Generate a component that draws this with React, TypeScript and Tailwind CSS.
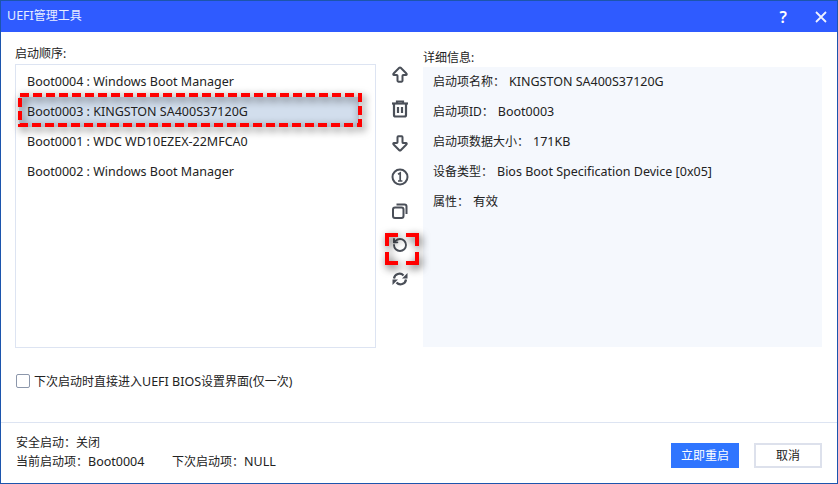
import React from "react";
import { ArrowBigDown, ArrowBigUp, RotateCcw } from "lucide-react";

const bootItems = [
  "Boot0004 : Windows Boot Manager",
  "Boot0003 : KINGSTON SA400S37120G",
  "Boot0001 : WDC WD10EZEX-22MFCA0",
  "Boot0002 : Windows Boot Manager",
];

const details = [
  { label: "启动项名称：", value: "KINGSTON SA400S37120G" },
  { label: "启动项ID：", value: "Boot0003" },
  { label: "启动项数据大小：", value: "171KB" },
  { label: "设备类型：", value: "Bios Boot Specification Device [0x05]" },
  { label: "属性：", value: "有效" },
];

const fontClass = "[font-family:'Noto_Sans','Noto_Sans_CJK_SC',sans-serif]";

function TrashIcon() {
  return (
    <svg width="18" height="18" viewBox="0 0 18 18" fill="none" stroke="#4a4f58" strokeWidth="2.2">
      <path d="M1 3.5h16" />
      <path d="M6 3V1.5h6V3" />
      <path d="M3 4v11a1.5 1.5 0 0 0 1.5 1.5h9A1.5 1.5 0 0 0 15 15V4" />
      <path d="M7 7v6M11 7v6" />
    </svg>
  );
}

function InfoOneIcon() {
  return (
    <svg width="18" height="18" viewBox="0 0 18 18" fill="none" stroke="#4a4f58" strokeWidth="2">
      <circle cx="9" cy="9" r="7.5" />
      <path d="M7 6.2 9.2 5v7.2M7 13h4.4" strokeWidth="1.7" />
    </svg>
  );
}

function CopyIcon() {
  return (
    <svg width="16" height="16" viewBox="0 0 16 16" fill="none" stroke="#4a4f58" strokeWidth="2">
      <rect x="1" y="4.5" width="10.5" height="10.5" rx="2" />
      <path d="M4.5 1.5H12.5a2 2 0 0 1 2 2V11" />
    </svg>
  );
}

function SyncIcon() {
  return (
    <svg width="16" height="14" viewBox="0 0 16 14" fill="none" stroke="#4a4f58" strokeWidth="2.2">
      <path d="M2 6.5A5.5 5.5 0 0 1 11.5 3.5" />
      <path d="M14 7.5A5.5 5.5 0 0 1 4.5 10.5" />
      <path d="M10 6.5h5.5V1z" fill="#4a4f58" stroke="none" />
      <path d="M6 7.5H.5V13z" fill="#4a4f58" stroke="none" />
    </svg>
  );
}

function ToolButton({ children }: { children: React.ReactNode }) {
  return <div className="h-[34px] w-full flex items-center justify-center">{children}</div>;
}

export default function App() {
  return (
    <div className={`relative w-[838px] h-[484px] bg-white border border-[#1c55ad] flex flex-col overflow-hidden text-[12px] text-[#222] ${fontClass}`}>
      {/* Title bar */}
      <div className="h-[31px] shrink-0 bg-[#2f5bff] flex items-center justify-between pl-[6px] pr-[8px] text-white">
        <span className="text-[#e8edff]"><span className="text-[12.5px]">UEFI</span>管理工具</span>
        <div className="flex items-center gap-[28px]">
          <span className="text-[16px] font-semibold leading-none">?</span>
          <svg width="12" height="12" viewBox="0 0 12 12" stroke="#eef1ff" strokeWidth="1.8" className="mr-[2px]">
            <path d="M1 1l10 10M11 1 1 11" />
          </svg>
        </div>
      </div>

      {/* Main */}
      <div className="flex pl-[14px] pr-[15px] pt-[13px]">
        <div className="w-[361px] shrink-0">
          <div className="h-[19px] leading-[17px]">启动顺序:</div>
          <div className="h-[284px] border border-[#dde4f2] pt-[2px] text-[12.5px]">
            {bootItems.map((item, i) => (
              <div
                key={item}
                className={`h-[30px] flex items-center ${i === 1 ? "bg-[#d2deed] ml-[3px] mr-[16px] pl-[8px]" : "pl-[11px]"}`}
              >
                {item}
              </div>
            ))}
          </div>
        </div>

        <div className="w-[47px] shrink-0 pt-[13px] flex flex-col items-center">
          <ToolButton><ArrowBigUp size={20} color="#4a4f58" strokeWidth={2.4} /></ToolButton>
          <ToolButton><TrashIcon /></ToolButton>
          <ToolButton><ArrowBigDown size={20} color="#4a4f58" strokeWidth={2.4} /></ToolButton>
          <ToolButton><InfoOneIcon /></ToolButton>
          <ToolButton><CopyIcon /></ToolButton>
          <ToolButton><RotateCcw size={16} color="#4a4f58" strokeWidth={2.8} /></ToolButton>
          <ToolButton><SyncIcon /></ToolButton>
        </div>

        <div className="flex-1">
          <div className="h-[22px] leading-[26px]">详细信息:</div>
          <div className="h-[280px] bg-[#f5f8fd] pl-[10px]">
            {details.map((d) => (
              <div key={d.label} className="h-[30px] flex items-center">
                <span className="mr-[4px]">{d.label}</span>
                <span className="text-[12.5px]">{d.value}</span>
              </div>
            ))}
          </div>
        </div>
      </div>

      {/* Checkbox */}
      <div className="flex items-center pl-[15px] mt-[27px] h-[15px] gap-[4px]">
        <div className="w-[14px] h-[14px] -mt-[3px] rounded-[2px] border border-[#8c97ab] bg-white" />
        <span>下次启动时直接进入<span className="text-[12.5px]">UEFI BIOS</span>设置界面(仅一次)</span>
      </div>

      {/* Footer */}
      <div className="mt-[32px] flex-1 border-t border-[#dde4f2] flex pl-[15px] pr-[15px]">
        <div className="pt-[10px] leading-[19px]">
          <div>安全启动：关闭</div>
          <div className="flex">
            <span className="w-[156px]">当前启动项：<span className="text-[12.5px]">Boot0004</span></span>
            <span>下次启动项：<span className="text-[12.5px]">NULL</span></span>
          </div>
        </div>
        <div className="ml-auto pt-[20px] flex gap-[15px]">
          <button className="w-[68px] h-[25px] bg-[#2f75ff] text-white flex items-center justify-center">立即重启</button>
          <button className="w-[68px] h-[25px] border-2 border-[#dde1ec] bg-white flex items-center justify-center">取消</button>
        </div>
      </div>

      {/* red marks over the screenshot */}
      <svg width="344" height="35" fill="none" className="absolute left-[17px] top-[92px] drop-shadow-[2px_3px_4px_rgba(0,0,0,0.7)]">
        <rect x="2" y="2" width="340" height="30" stroke="#ff0000" strokeWidth="4" strokeDasharray="9 4" />
      </svg>
      <svg width="34" height="32" fill="none" className="absolute left-[384px] top-[232px] drop-shadow-[2px_3px_4px_rgba(0,0,0,0.7)]">
        <path d="M2 13V2h11M21 2h11v11M32 19v11H21M13 30H2V19" stroke="#ff0000" strokeWidth="4" />
      </svg>
    </div>
  );
}
